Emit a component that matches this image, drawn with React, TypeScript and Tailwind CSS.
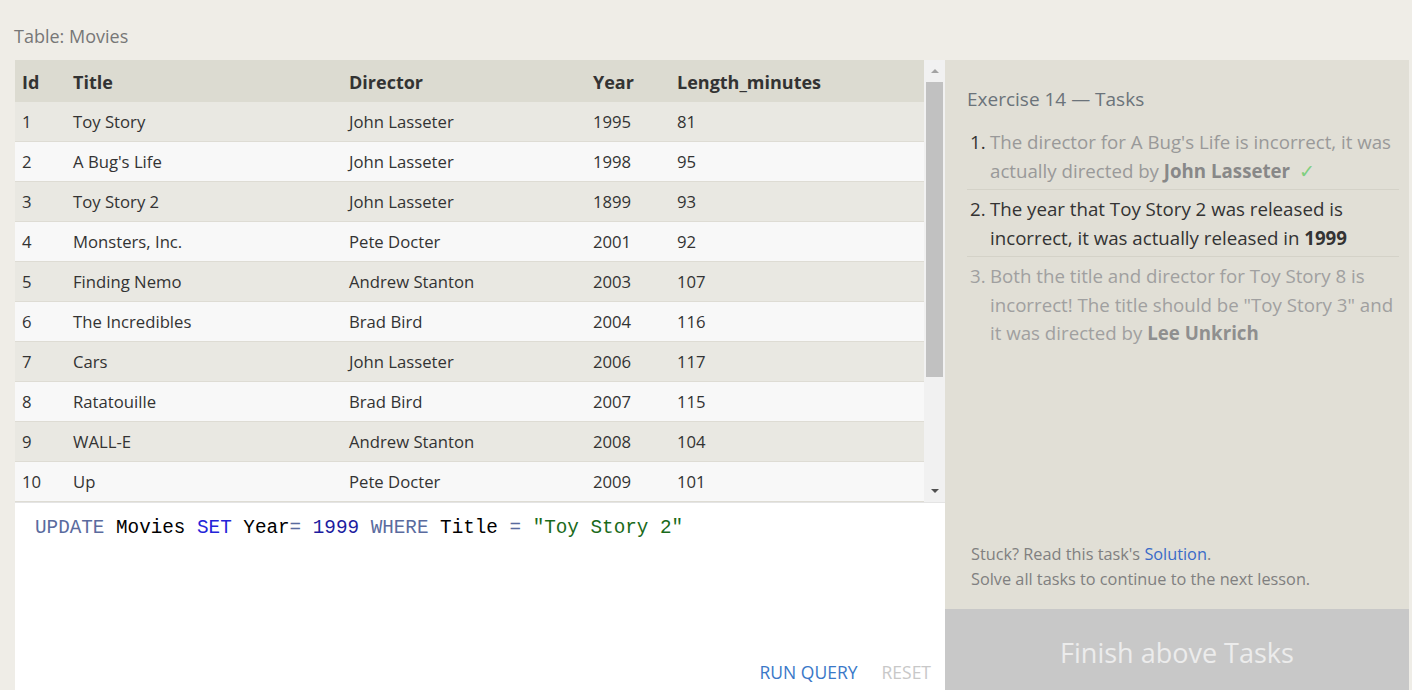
import React from "react";

const movies: [number, string, string, number, number][] = [
  [1, "Toy Story", "John Lasseter", 1995, 81],
  [2, "A Bug's Life", "John Lasseter", 1998, 95],
  [3, "Toy Story 2", "John Lasseter", 1899, 93],
  [4, "Monsters, Inc.", "Pete Docter", 2001, 92],
  [5, "Finding Nemo", "Andrew Stanton", 2003, 107],
  [6, "The Incredibles", "Brad Bird", 2004, 116],
  [7, "Cars", "John Lasseter", 2006, 117],
  [8, "Ratatouille", "Brad Bird", 2007, 115],
  [9, "WALL-E", "Andrew Stanton", 2008, 104],
  [10, "Up", "Pete Docter", 2009, 101],
];

const cols = "grid grid-cols-[51px_276px_244px_84px_1fr]";

function Scrollbar() {
  return (
    <div className="w-[21px] shrink-0 bg-[#f1f1f1] flex flex-col items-center">
      <div className="h-[22px] flex items-center justify-center">
        <div className="w-0 h-0 border-l-[4px] border-r-[4px] border-b-[4px] border-l-transparent border-r-transparent border-b-[#a3a3a3]" />
      </div>
      <div className="w-[17px] h-[295px] bg-[#c1c1c1]" />
      <div className="flex-1" />
      <div className="h-[22px] flex items-center justify-center">
        <div className="w-0 h-0 border-l-[4px] border-r-[4px] border-t-[4px] border-l-transparent border-r-transparent border-t-[#505050]" />
      </div>
    </div>
  );
}

export default function App() {
  const sans = { fontFamily: '"Open Sans", "Noto Sans", sans-serif' };
  return (
    <div className="w-[1412px] h-[690px] overflow-hidden bg-[#efede7] flex flex-col" style={sans}>
      <div className="h-[60px] pl-[14px] pt-[24px] text-[18px] text-[#777] leading-[24px]">Table: Movies</div>
      <div className="flex flex-1 min-h-0 pl-[15px] pr-[3px]">
        {/* left column */}
        <div className="w-[930px] flex flex-col">
          <div className="flex h-[442px]">
            <div className="flex-1 overflow-hidden">
              <div className={`${cols} h-[42px] pt-[2px] items-center bg-[#dcdbd1] text-[18px] font-bold text-[#333]`}>
                <div className="pl-[7px]">Id</div>
                <div className="pl-[7px]">Title</div>
                <div className="pl-[7px]">Director</div>
                <div className="pl-[7px]">Year</div>
                <div className="pl-[7px]">Length_minutes</div>
              </div>
              {movies.map((m, i) => (
                <div
                  key={m[0]}
                  className={`${cols} h-[40px] items-center text-[16.7px] text-[#333] border-b border-[#dedcd4] ${
                    i % 2 === 0 ? "bg-[#e9e8e2]" : "bg-[#f8f8f8]"
                  }`}
                >
                  <div className="pl-[7px]">{m[0]}</div>
                  <div className="pl-[7px]">{m[1]}</div>
                  <div className="pl-[7px]">{m[2]}</div>
                  <div className="pl-[7px]">{m[3]}</div>
                  <div className="pl-[7px]">{m[4]}</div>
                </div>
              ))}
            </div>
            <Scrollbar />
          </div>
          <div className="flex-1 bg-white border-t border-[#e4e4e4] flex flex-col">
            <div
              className="pl-[20px] pt-[13px] text-[19.3px] leading-[24px] whitespace-pre"
              style={{ fontFamily: '"Liberation Mono", "DejaVu Sans Mono", monospace' }}
            >
              <span className="text-[#5a6b9e]">UPDATE</span>
              <span className="text-black"> Movies </span>
              <span className="text-[#2323d8]">SET</span>
              <span className="text-black"> Year</span>
              <span className="text-[#5a6b9e]">=</span>
              <span className="text-black"> </span>
              <span className="text-[#1c1ca0]">1999</span>
              <span className="text-black"> </span>
              <span className="text-[#5a6b9e]">WHERE</span>
              <span className="text-black"> Title </span>
              <span className="text-[#5a6b9e]">=</span>
              <span className="text-black"> </span>
              <span className="text-[#1a6a1a]">"Toy Story 2"</span>
            </div>
            <div className="flex-1" />
            <div className="flex justify-end gap-[24px] pr-[14px] pb-[6px] text-[17.5px] leading-[24px]">
              <span className="text-[#3a78c8]">RUN QUERY</span>
              <span className="text-[#c8c8c8]">RESET</span>
            </div>
          </div>
        </div>
        {/* right panel */}
        <div className="flex-1 bg-[#e1dfd6] flex flex-col">
          <div className="pl-[22px] pr-[10px] pt-[26px]">
            <div className="text-[19px] text-[#6b737a] leading-[26px]">Exercise 14 — Tasks</div>
            <ol className="mt-[16px] text-[18.7px] leading-[28.5px]">
              <li className="flex text-[#999] pb-[4px] border-b border-[#d4d2c8]">
                <span className="w-[23px] pl-[3px] text-[#333] shrink-0">1.</span>
                <span>
                  The director for A Bug's Life is incorrect, it was actually directed by{" "}
                  <b className="text-[#888]">John Lasseter</b>
                  <span className="text-[#7fcf7f] ml-[9px]">✓</span>
                </span>
              </li>
              <li className="flex text-[#333] pt-[5px] pb-[4px] border-b border-[#d4d2c8]">
                <span className="w-[23px] pl-[3px] shrink-0">2.</span>
                <span>
                  The year that Toy Story 2 was released is incorrect, it was actually released in <b>1999</b>
                </span>
              </li>
              <li className="flex text-[#a0a0a0] pt-[5px]">
                <span className="w-[23px] pl-[3px] shrink-0">3.</span>
                <span>
                  Both the title and director for Toy Story 8 is incorrect! The title should be "Toy Story 3" and it
                  was directed by <b className="text-[#8f8f8f]">Lee Unkrich</b>
                </span>
              </li>
            </ol>
          </div>
          <div className="flex-1" />
          <div className="pl-[26px] pb-[17px] text-[16.3px] leading-[25px] text-[#808080]">
            <div>
              Stuck? Read this task's <span className="text-[#3a6bc8]">Solution</span>.
            </div>
            <div>Solve all tasks to continue to the next lesson.</div>
          </div>
          <div className="h-[81px] pt-[8px] bg-[#c8c8c8] flex items-center justify-center text-[27px] text-[#ececec]">
            Finish above Tasks
          </div>
        </div>
      </div>
    </div>
  );
}
